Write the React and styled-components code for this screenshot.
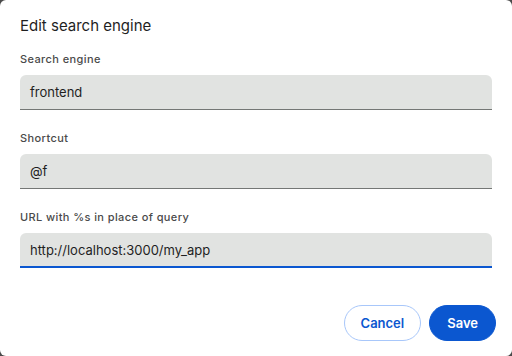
import React from 'react';
import styled, { createGlobalStyle } from 'styled-components';

const GlobalStyle = createGlobalStyle`
  html, body {
    margin: 0;
    padding: 0;
    background: #4a4a4a;
  }
  * { box-sizing: border-box; }
`;

const Dialog = styled.div`
  width: 512px;
  height: 356px;
  background: #ffffff;
  border-radius: 6px;
  padding: 16px 16px 15px 20px;
  display: flex;
  flex-direction: column;
  font-family: 'Inter', 'Roboto', sans-serif;
  color: #1f1f1f;
`;

const Title = styled.h1`
  margin: 0 0 15px;
  font-size: 15px;
  line-height: 20px;
  font-weight: 400;
  color: #1f1f1f;
`;

const Field = styled.div`
  display: flex;
  flex-direction: column;
  gap: 8px;
  margin-right: 4px;
  margin-bottom: 20px;
`;

const Label = styled.label`
  font-size: 11px;
  line-height: 16px;
  font-weight: 500;
  letter-spacing: 0.4px;
  color: #4a4a4a;
`;

const Input = styled.div`
  height: 35px;
  display: flex;
  align-items: center;
  padding: 0 10px;
  background: #e1e3e1;
  border-radius: 6px 6px 0 0;
  border-bottom: ${p => (p.$focused ? '2px solid #0b57d0' : '1px solid #747775')};
  font-size: 13px;
  color: #1f1f1f;
`;

const Actions = styled.div`
  margin-top: auto;
  display: flex;
  justify-content: flex-end;
  gap: 8px;
`;

const Button = styled.button`
  height: 36px;
  border-radius: 18px;
  font-family: inherit;
  font-size: 13px;
  font-weight: 600;
  cursor: pointer;
  padding: 0 ${p => (p.$primary ? '17px' : '16px')};
  border: 1px solid ${p => (p.$primary ? '#0b57d0' : '#a8c7fa')};
  background: ${p => (p.$primary ? '#0b57d0' : '#ffffff')};
  color: ${p => (p.$primary ? '#ffffff' : '#0b57d0')};
`;

const fields = [
  { label: 'Search engine', value: 'frontend' },
  { label: 'Shortcut', value: '@f' },
  { label: 'URL with %s in place of query', value: 'http://localhost:3000/my_app', focused: true },
];

export default function App() {
  return (
    <>
      <GlobalStyle />
      <Dialog>
        <Title>Edit search engine</Title>
        {fields.map(f => (
          <Field key={f.label}>
            <Label>{f.label}</Label>
            <Input $focused={f.focused}>{f.value}</Input>
          </Field>
        ))}
        <Actions>
          <Button>Cancel</Button>
          <Button $primary>Save</Button>
        </Actions>
      </Dialog>
    </>
  );
}
